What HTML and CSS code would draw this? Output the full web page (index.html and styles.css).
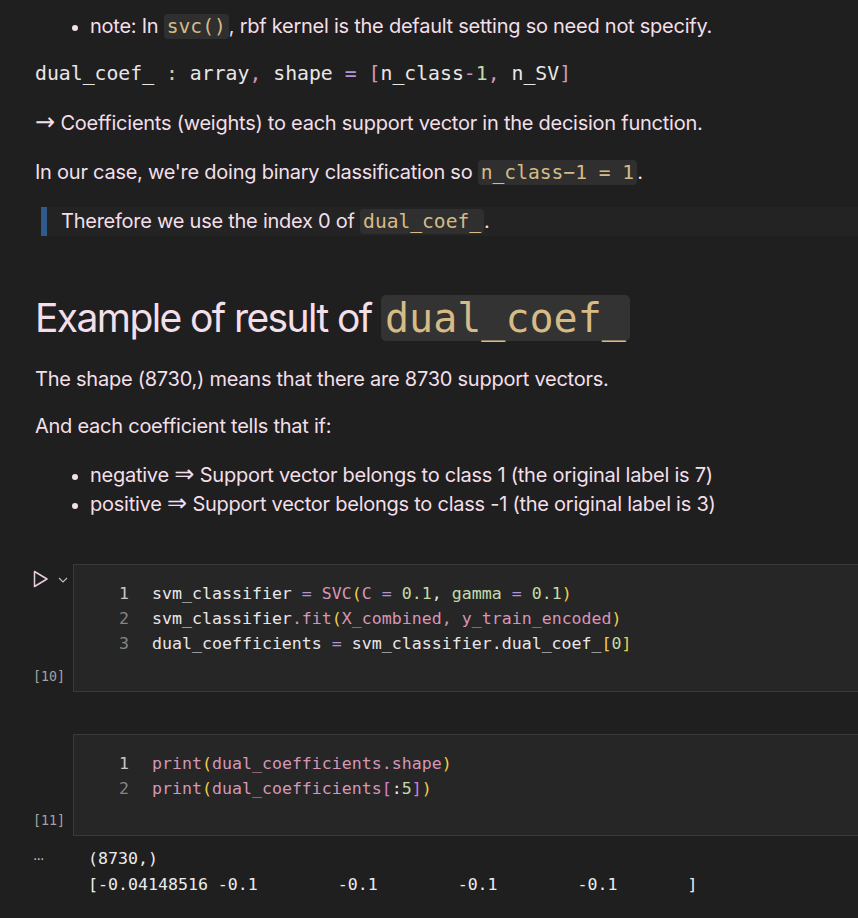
FILE: index.html
```html
<!DOCTYPE html>
<html>
<head>
<meta charset="utf-8">
<link rel="stylesheet" href="styles.css">
</head>
<body>
<div class="page">
  <div class="md">
    <ul class="list list-top">
      <li>note: In <code class="ic">svc()</code>, rbf kernel is the default setting so need not specify.</li>
    </ul>
    <div class="codeblock"><span class="w">dual_coef_ </span><span class="gold">:</span><span class="w"> array</span><span class="pk">,</span><span class="w"> shape </span><span class="pu">=</span><span class="w"> </span><span class="pk">[</span><span class="w">n_class</span><span class="pu">-</span><span class="gr">1</span><span class="pk">,</span><span class="w"> n_SV</span><span class="pk">]</span></div>
    <p class="p p-arrow"><span class="arrow">→</span> Coefficients (weights) to each support vector in the decision function.</p>
    <p class="p p-case">In our case, we're doing binary classification so <code class="ic">n_class−1 = 1</code>.</p>
    <blockquote class="quote">Therefore we use the index 0 of <code class="ic">dual_coef_</code>.</blockquote>
    <h1 class="h1">Example of result of <code class="hc">dual_coef_</code></h1>
    <p class="p p-shape">The shape (8730,) means that there are 8730 support vectors.</p>
    <p class="p p-each">And each coefficient tells that if:</p>
    <ul class="list list-bottom">
      <li>negative <span class="arrow">⇒</span> Support vector belongs to class 1 (the original label is 7)</li>
      <li>positive <span class="arrow">⇒</span> Support vector belongs to class -1 (the original label is 3)</li>
    </ul>
  </div>

  <div class="cell cell-1">
    <div class="gutter">
      <div class="run">
        <svg class="play" width="16" height="18" viewBox="0 0 16 18"><path d="M1.5 1.5 L14 9 L1.5 16.5 Z" fill="none" stroke="#e8cfdc" stroke-width="1.5" stroke-linejoin="round"/></svg>
        <svg class="chev" width="10" height="6" viewBox="0 0 10 6"><path d="M1 1 L5 5 L9 1" fill="none" stroke="#bdbdbd" stroke-width="1.1"/></svg>
      </div>
      <div class="count">[10]</div>
    </div>
    <div class="editor">
      <div class="line"><span class="ln ln-active">1</span><span class="src"><span class="w">svm_classifier </span><span class="pu">=</span><span class="w"> </span><span class="pk">SVC</span><span class="yl">(</span><span class="pk">C</span><span class="w"> </span><span class="pu">=</span><span class="w"> </span><span class="gr">0.1</span><span class="w">, </span><span class="gr">gamma</span><span class="w"> </span><span class="pu">=</span><span class="w"> </span><span class="gr">0.1</span><span class="yl">)</span></span></div>
      <div class="line"><span class="ln">2</span><span class="src"><span class="w">svm_classifier</span><span class="pk">.fit</span><span class="yl">(</span><span class="pk">X_combined, y_train_encoded</span><span class="yl">)</span></span></div>
      <div class="line"><span class="ln">3</span><span class="src"><span class="w">dual_coefficients </span><span class="pu">=</span><span class="w"> svm_classifier.dual_coef_</span><span class="yl">[</span><span class="gr">0</span><span class="yl">]</span></span></div>
    </div>
  </div>

  <div class="cell cell-2">
    <div class="gutter">
      <div class="count">[11]</div>
    </div>
    <div class="editor">
      <div class="line"><span class="ln ln-active">1</span><span class="src"><span class="pk">print</span><span class="yl">(</span><span class="pk">dual_coefficients.shape</span><span class="yl">)</span></span></div>
      <div class="line"><span class="ln">2</span><span class="src"><span class="pk">print</span><span class="yl">(</span><span class="pk">dual_coefficients</span><span class="mg">[</span><span class="w">:</span><span class="gr">5</span><span class="mg">]</span><span class="yl">)</span></span></div>
    </div>
  </div>

  <div class="output">
    <div class="dots">···</div>
    <pre class="out">(8730,)
[-0.04148516 -0.1        -0.1        -0.1        -0.1       ]</pre>
  </div>
</div>
</body>
</html>
```
FILE: styles.css
```css
html, body {
  margin: 0;
  padding: 0;
  background: #1f1f1f;
  overflow: hidden;
}
.page {
  width: 1000px;
  font-family: Inter, "Liberation Sans", sans-serif;
  font-size: 20px;
  letter-spacing: -0.25px;
  color: #f3dfea;
}
.md {
  padding: 12px 0 0 35px;
}
.list {
  margin: 0;
  padding-left: 55px;
  line-height: 29px;
}
.list li::marker {
  font-size: 18px;
}
.ic {
  font-family: "DejaVu Sans Mono", monospace;
  font-size: 19.6px;
  letter-spacing: 0;
  color: #d6bb86;
  background: #2f2f2f;
  border-radius: 4px;
  padding: 1px 3px;
}
.codeblock {
  font-family: "DejaVu Sans Mono", monospace;
  font-size: 19.8px;
  letter-spacing: 0;
  line-height: 29px;
  margin-top: 18px;
  white-space: pre;
}
.w { color: #e9e6e8; }
.gold { color: #dcc99a; }
.pk { color: #d597b8; }
.pu { color: #b592d8; }
.gr { color: #c3dbab; }
.yl { color: #f2cd4a; }
.mg { color: #cf7fd6; }
.p {
  margin: 20px 0 0;
  line-height: 29px;
}
.p-arrow { margin-top: 21px; }
.arrow {
  font-family: "DejaVu Sans", sans-serif;
  font-size: 24px;
  line-height: 20px;
  letter-spacing: 0;
}
.quote {
  margin: 20px 0 0 6px;
  padding: 0 0 0 14px;
  border-left: 6px solid #31598a;
  background: #232323;
  line-height: 29px;
}
.h1 {
  margin: 57px 0 0;
  font-size: 39px;
  font-weight: 400;
  line-height: 50px;
  letter-spacing: -1.6px;
}
.hc {
  font-family: "DejaVu Sans Mono", monospace;
  font-size: 40px;
  letter-spacing: 0;
  color: #d6bb86;
  background: #333333;
  border-radius: 5px;
  padding: 0 4px;
}
.p-shape { margin-top: 22px; }
.p-each { margin-top: 18px; }
.list-bottom { margin-top: 20px; }

.cell {
  display: flex;
}
.cell-1 { margin-top: 45px; }
.cell-2 { margin-top: 42px; }
.gutter {
  width: 73px;
  flex: none;
  display: flex;
  flex-direction: column;
  justify-content: space-between;
  padding: 6px 0 7px 33px;
  box-sizing: border-box;
}
.cell-2 .gutter { justify-content: flex-end; }
.run {
  display: flex;
  align-items: center;
  gap: 9px;
}
.chev { margin-top: 1px; }
.count {
  font-family: "DejaVu Sans Mono", monospace;
  font-size: 13.3px;
  letter-spacing: 0;
  color: #a3a3a3;
  line-height: 16px;
}
.editor {
  flex: 1;
  background: #262626;
  border: 1px solid #3a3a3a;
  padding: 16px 0 35px;
  font-family: "DejaVu Sans Mono", monospace;
  font-size: 16.6px;
  letter-spacing: 0;
  line-height: 25px;
}
.cell-2 .editor { padding: 16px 0 34px; }
.line {
  display: flex;
}
.ln {
  width: 55px;
  text-align: right;
  margin-right: 23px;
  color: #858585;
}
.ln-active { color: #c6c6c6; }
.src { white-space: pre; }
.output {
  display: flex;
  padding-top: 10px;
}
.dots {
  width: 55px;
  padding-left: 33px;
  color: #bdbdbd;
  font-family: "DejaVu Sans", sans-serif;
  font-size: 14px;
  line-height: 26px;
  letter-spacing: -1px;
}
.out {
  margin: 0;
  font-family: "DejaVu Sans Mono", monospace;
  font-size: 16.6px;
  letter-spacing: 0;
  line-height: 26px;
  color: #ececec;
}
```
